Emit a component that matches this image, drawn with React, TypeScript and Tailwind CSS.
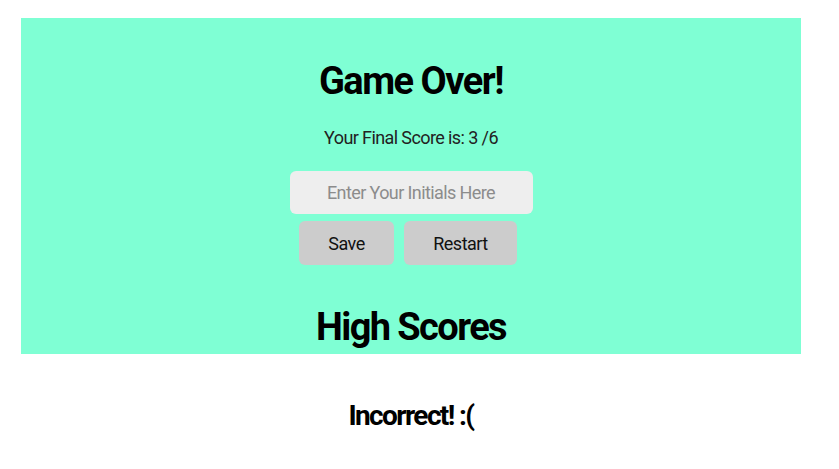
export default function App() {
  return (
    <div
      className="min-h-[469px] w-[839px] bg-white text-black"
      style={{ fontFamily: 'Roboto, "Liberation Sans", sans-serif' }}
    >
      <div className="pt-[18px] pl-[21px]">
        <div className="flex h-[336px] w-[780px] flex-col items-center bg-[#7fffd4]">
          <h1 className="mt-[41px] text-[38px] leading-[44px] font-bold tracking-[-1.5px]">Game Over!</h1>
          <p className="mt-[24px] text-[18px] leading-[22px] tracking-[-0.6px] text-[#222]">Your Final Score is: 3 /6</p>
          <input
            placeholder="Enter Your Initials Here"
            className="mt-[22px] box-border h-[43px] w-[243px] rounded-md bg-[#eeeeee] text-center text-[18px] leading-[43px] tracking-[-0.6px] text-black outline-none placeholder:text-[#8c8c8c]"
          />
          <div className="mt-[7px] flex gap-[10px] pr-[6px]">
            <button className="h-[44px] w-[95px] rounded-md bg-[#cccccc] text-[18px] tracking-[-0.5px] text-[#111]">Save</button>
            <button className="h-[44px] w-[113px] rounded-md bg-[#cccccc] text-[18px] tracking-[-0.5px] text-[#111]">Restart</button>
          </div>
          <h2 className="mt-[40px] text-[38px] leading-[44px] font-bold tracking-[-1.6px]">High Scores</h2>
        </div>
        <div className="flex w-[780px] justify-center">
          <p className="mt-[45px] text-[28px] leading-[34px] font-bold tracking-[-1.6px]">Incorrect! :(</p>
        </div>
      </div>
    </div>
  );
}
